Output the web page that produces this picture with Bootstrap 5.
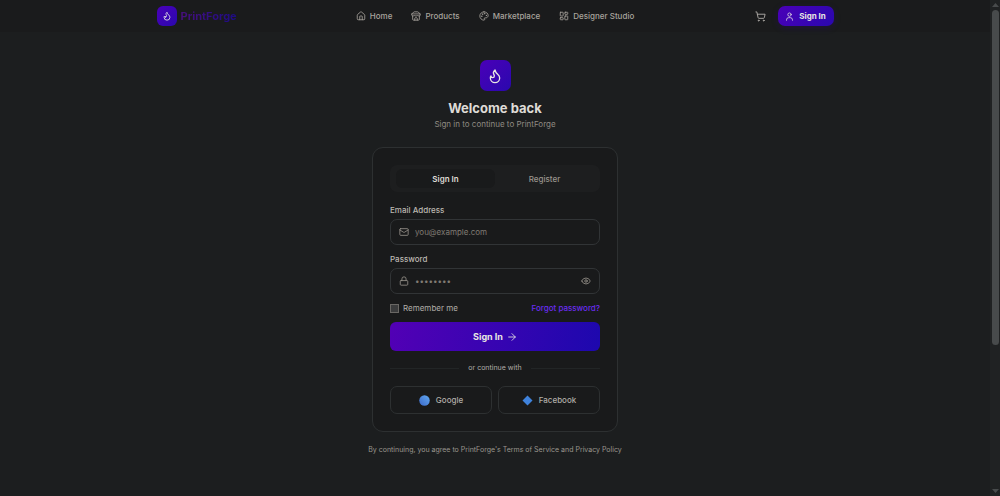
<!DOCTYPE html>
<html lang="en" data-bs-theme="dark">
<head>
<meta charset="utf-8">
<meta name="viewport" content="width=device-width, initial-scale=1">
<title>PrintForge</title>
<link href="https://cdn.jsdelivr.net/npm/bootstrap@5.3.0/dist/css/bootstrap.min.css" rel="stylesheet">
<style>
  body { background: #1c1e1f; color: #b0ada8; font-family: Inter, "Liberation Sans", sans-serif; font-size: 8px; line-height: 12px; }
  svg { fill: none; stroke: currentColor; stroke-width: 2; stroke-linecap: round; stroke-linejoin: round; width: 10px; height: 10px; flex: none; }
  a { text-decoration: none; color: inherit; }
  button { line-height: inherit; }
  .page { min-height: 100vh; }
  .topbar { background: #1a1b1c; height: 32px; }
  .topbar-inner { width: 100%; max-width: 677px; }
  .side { flex: 1 1 0; }
  .menu { gap: 19px; color: #a8a49d; font-weight: 500; }
  .menu a { gap: 4px; }
  .brand { gap: 4px; }
  .forge { background: linear-gradient(135deg, #4a00b8, #2a08ae); color: #e8e6e3; }
  .logo { width: 20px; height: 20px; border-radius: 6px; }
  .logo-lg { width: 31px; height: 31px; border-radius: 7px; }
  .logo-lg svg { width: 16px; height: 16px; }
  .brand-name { font-size: 11px; font-weight: 700; background: linear-gradient(90deg, #47107c, #1d0b86); -webkit-background-clip: text; background-clip: text; color: transparent; }
  .cart svg { width: 11px; height: 11px; }
  .account { height: 20px; width: 56px; border: 0; border-radius: 7px; font-weight: 700; gap: 5px; box-shadow: 0 2px 6px #30009040; }
  .account svg { width: 9px; height: 9px; }
  .auth { width: 246px; }
  .intro { padding-top: 28px; }
  h1 { font-size: 13px; line-height: 18px; font-weight: 700; color: #dedbd6; margin: 8px 0 1px; }
  .subtitle { color: #8f8a82; line-height: 12px; }
  .panel { background: #191a1b; border: 1px solid #2d3031; border-radius: 11px; padding: 17px; margin-top: 17px; }
  .switcher { background: #1d1e1f; border-radius: 7px; padding: 4px 6px; height: 27px; }
  .switcher button { flex: 1 1 0; border: 0; border-radius: 6px; background: none; color: #9a958d; font-weight: 500; padding: 0; }
  .switcher .active { background: #191a1b; color: #dedbd6; font-weight: 600; }
  .field-label { display: block; font-weight: 500; color: #bcb8b1; line-height: 12px; margin-bottom: 3px; }
  .field { height: 26px; border: 1px solid #313436; border-radius: 7px; padding: 0 8px; gap: 6px; color: #98938b; }
  .field:focus-within { border-color: #4a12c8; }
  .field input { flex: 1 1 0; min-width: 0; background: none; border: 0; outline: 0; padding: 0; color: #c8c4bd; font-size: 8px; }
  .field input::placeholder { color: #807b73; opacity: 1; }
  .field button { border: 0; background: none; padding: 0; color: inherit; }
  .remember { gap: 4px; }
  .remember input { appearance: none; width: 9px; height: 9px; margin: 0; background: #3b3c3d; border: 1px solid #696764; }
  .remember input:checked { background: #4a12c8; }
  .forgot { color: #6a2cf0; font-weight: 500; }
  .submit { height: 29px; border: 0; border-radius: 6px; background: linear-gradient(100deg, #5200b5, #1d08ae); color: #e8e6e3; font-size: 9px; font-weight: 700; gap: 4px; }
  .divider { gap: 9px; font-size: 7px; line-height: 10px; margin: 12px 0 13px; }
  .divider span:empty { flex: 1; height: 1px; background: #222526; }
  .social { gap: 6px; }
  .social button { flex: 1 1 0; height: 28px; border: 1px solid #2d3031; border-radius: 7px; background: none; color: #b0ada8; font-weight: 500; gap: 6px; }
  .social svg { width: 11px; height: 11px; stroke: none; }
  .legal { font-size: 7px; line-height: 10px; color: #9b968e; margin: 13px -8px 0; }
  .scroller { width: 10px; height: 100vh; background: #202223; color: #484b4c; position: sticky; top: 0; padding: 2px 0; }
  .scroller svg { width: 7px; height: 6px; fill: currentColor; stroke: none; }
  .thumb { width: 7px; height: 68%; border-radius: 4px; background: #484b4c; margin-top: 2px; }
</style>
</head>
<body>
<svg class="d-none" aria-hidden="true">
  <symbol id="flame" viewBox="0 0 24 24"><path d="M8.5 14.5A2.5 2.5 0 0 0 11 12c0-1.38-.5-2-1-3-1.072-2.143-.224-4.054 2-6 .5 2.500 2 4.900 4 6.500 2 1.600 3 3.500 3 5.500a7 7 0 1 1-14 0c0-1.153.433-2.294 1-3a2.500 2.500 0 0 0 2.500 2.500z"/></symbol>
</svg>
<div class="page d-flex">
  <div class="flex-grow-1">
    <header class="topbar d-flex justify-content-center">
      <div class="topbar-inner d-flex align-items-center">
        <div class="side d-flex">
          <a href="#" class="brand d-flex align-items-center">
            <span class="logo forge d-flex align-items-center justify-content-center"><svg><use href="#flame"/></svg></span>
            <span class="brand-name">PrintForge</span>
          </a>
        </div>
        <nav class="menu d-flex">
          <a href="#" class="d-flex align-items-center"><svg viewBox="0 0 24 24"><path d="M15 21v-8a1 1 0 0 0-1-1h-4a1 1 0 0 0-1 1v8M3 10a2 2 0 0 1 .7-1.500l7-6a2 2 0 0 1 2.600 0l7 6A2 2 0 0 1 21 10v9a2 2 0 0 1-2 2H5a2 2 0 0 1-2-2z"/></svg>Home</a>
          <a href="#" class="d-flex align-items-center"><svg viewBox="0 0 24 24"><path d="M2 7l4.400-4.400A2 2 0 0 1 7.800 2h8.400a2 2 0 0 1 1.400.6L22 7M4 12v8a2 2 0 0 0 2 2h12a2 2 0 0 0 2-2v-8M15 22v-4a2 2 0 0 0-2-2h-2a2 2 0 0 0-2 2v4M2 7h20v3a2 2 0 0 1-2 2c-2 0-2-1-4-1s-2 1-4 1-2-1-4-1-2 1-4 1a2 2 0 0 1-2-2z"/></svg>Products</a>
          <a href="#" class="d-flex align-items-center"><svg viewBox="0 0 24 24"><path d="M12 2C6.500 2 2 6.500 2 12s4.500 10 10 10c.93 0 1.650-.75 1.650-1.690 0-.44-.18-.84-.44-1.120-.29-.29-.44-.65-.44-1.130a1.640 1.640 0 0 1 1.670-1.670h2c3.050 0 5.560-2.500 5.560-5.550C22 6 17.500 2 12 2z"/><circle cx="13.500" cy="6.500" r=".6"/><circle cx="17.500" cy="10.500" r=".6"/><circle cx="8.500" cy="7.500" r=".6"/><circle cx="6.500" cy="12.500" r=".6"/></svg>Marketplace</a>
          <a href="#" class="d-flex align-items-center"><svg viewBox="0 0 24 24"><rect x="3" y="3" width="7" height="9" rx="1"/><rect x="14" y="3" width="7" height="5" rx="1"/><rect x="14" y="12" width="7" height="9" rx="1"/><rect x="3" y="16" width="7" height="5" rx="1"/></svg>Designer Studio</a>
        </nav>
        <div class="side d-flex justify-content-end align-items-center">
          <a href="#" class="cart d-flex me-2 pe-1" aria-label="Cart"><svg viewBox="0 0 24 24"><circle cx="8" cy="21" r="1"/><circle cx="19" cy="21" r="1"/><path d="M2 2h2l2.700 12.400a2 2 0 0 0 2 1.600h9.700a2 2 0 0 0 2-1.600L22 7H5.100"/></svg></a>
          <button type="button" class="account forge d-flex align-items-center justify-content-center p-0"><svg viewBox="0 0 24 24"><circle cx="12" cy="7" r="4.500"/><path d="M4 22v-1a6 6 0 0 1 6-6h4a6 6 0 0 1 6 6v1"/></svg>Sign In</button>
        </div>
      </div>
    </header>
    <main class="auth mx-auto">
      <div class="intro d-flex flex-column align-items-center text-center">
        <span class="logo-lg forge d-flex align-items-center justify-content-center"><svg><use href="#flame"/></svg></span>
        <h1>Welcome back</h1>
        <div class="subtitle">Sign in to continue to PrintForge</div>
      </div>
      <form class="panel">
        <div class="switcher d-flex">
          <button type="button" class="active">Sign In</button>
          <button type="button">Register</button>
        </div>
        <label class="field-label mt-2 pt-1" for="email">Email Address</label>
        <div class="field d-flex align-items-center">
          <svg viewBox="0 0 24 24"><rect x="2" y="4" width="20" height="16" rx="2"/><path d="M22 7l-9 5.700a2 2 0 0 1-2 0L2 7"/></svg>
          <input type="email" id="email" placeholder="you@example.com">
        </div>
        <label class="field-label mt-2" for="password">Password</label>
        <div class="field d-flex align-items-center">
          <svg viewBox="0 0 24 24"><rect x="3" y="11" width="18" height="11" rx="2"/><path d="M7 11V7a5 5 0 0 1 10 0v4"/></svg>
          <input type="password" id="password" placeholder="••••••••">
          <button type="button" class="d-flex" aria-label="Show password"><svg viewBox="0 0 24 24"><path d="M2 12.300a1 1 0 0 1 0-.6 10.750 10.750 0 0 1 20 0 1 1 0 0 1 0 .6 10.750 10.750 0 0 1-20 0z"/><circle cx="12" cy="12" r="3"/></svg></button>
        </div>
        <div class="d-flex justify-content-between my-2">
          <label class="remember d-flex align-items-center"><input type="checkbox">Remember me</label>
          <a href="#" class="forgot">Forgot password?</a>
        </div>
        <button type="submit" class="submit w-100 d-flex align-items-center justify-content-center">Sign In<svg viewBox="0 0 24 24"><path d="M4 12h16M12 4l8 8-8 8"/></svg></button>
        <div class="divider d-flex align-items-center"><span></span>or continue with<span></span></div>
        <div class="social d-flex">
          <button type="button" class="d-flex align-items-center justify-content-center p-0"><svg viewBox="0 0 22 22"><defs><linearGradient id="orb" x1="1" y1="0" x2="0" y2="1"><stop stop-color="#62aaf2"/><stop offset="1" stop-color="#3b68c8"/></linearGradient></defs><circle cx="11" cy="11" r="10.500" fill="url(#orb)"/></svg>Google</button>
          <button type="button" class="d-flex align-items-center justify-content-center p-0"><svg viewBox="0 0 22 22"><path d="M11 1l10 10-10 10L1 11z" fill="#3f82dc"/></svg>Facebook</button>
        </div>
      </form>
      <div class="legal text-center text-nowrap">By continuing, you agree to PrintForge's <a href="#">Terms of Service</a> and <a href="#">Privacy Policy</a></div>
    </main>
  </div>
  <div class="scroller d-flex flex-column align-items-center" aria-hidden="true">
    <svg viewBox="0 0 7 6"><path d="M3.500 1L7 5H0z"/></svg>
    <div class="thumb"></div>
    <svg class="mt-auto" viewBox="0 0 7 6"><path d="M3.500 5L0 1h7z"/></svg>
  </div>
</div>
<script src="https://cdn.jsdelivr.net/npm/bootstrap@5.3.0/dist/js/bootstrap.bundle.min.js"></script>
</body>
</html>
